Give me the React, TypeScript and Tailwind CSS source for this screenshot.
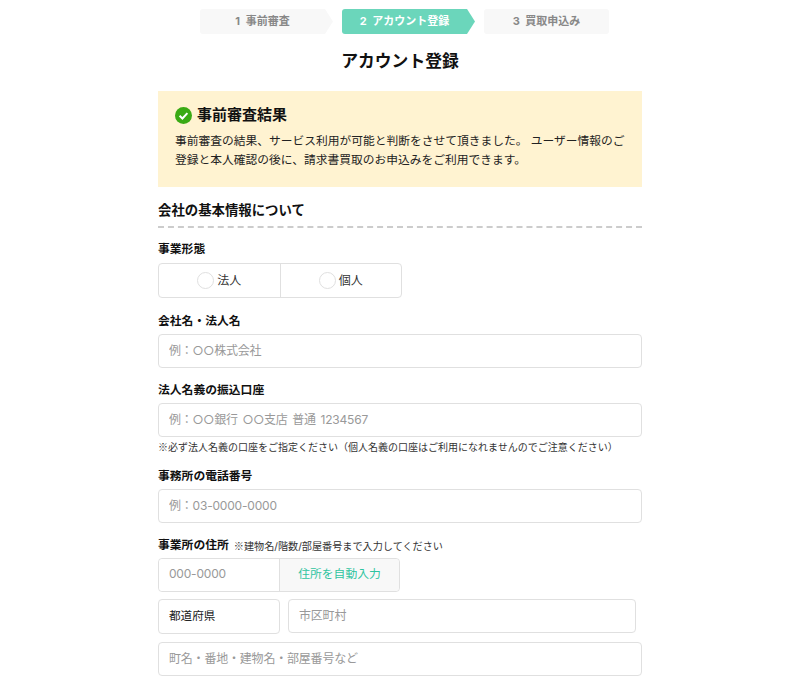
import React from "react";

function Kome() {
  return <span className="font-['Noto_Sans_CJK_JP',sans-serif]">※</span>;
}

function Label({ children, note }: { children: React.ReactNode; note?: string }) {
  return (
    <div className="flex items-center h-[18px] text-[11.8px] font-bold text-[#111]">
      <span>{children}</span>
      {note && (
        <span className="ml-[5px] text-[10.15px] font-normal text-[#333]">
          <Kome />
          {note}
        </span>
      )}
    </div>
  );
}

function Field({ placeholder, className = "" }: { placeholder: string; className?: string }) {
  return (
    <input
      readOnly
      placeholder={placeholder}
      className={`block h-[34px] rounded-[4px] border border-[#e0e0e0] bg-white px-[10px] pb-[2px] text-[12px] tracking-[-0.2px] [word-spacing:1.5px] text-[#333] outline-none placeholder:text-[#999] ${className}`}
    />
  );
}

function Radio({ label, border }: { label: string; border?: boolean }) {
  return (
    <div className={`flex flex-1 items-center justify-center gap-[3px] ${border ? "border-r border-[#e0e0e0]" : ""}`}>
      <span className="h-[17px] w-[17px] rounded-full border border-[#e0e0e0] bg-white" />
      <span className="text-[12px] text-[#333]">{label}</span>
    </div>
  );
}

export default function App() {
  return (
    <div className="min-h-[687px] bg-white font-['Inter','Noto_Sans_CJK_JP',sans-serif] text-[#111] overflow-hidden">
      <div className="mx-auto w-[484px] pt-[9px]">
        <div className="ml-[42px] flex gap-[9px] text-[11px] font-bold [word-spacing:3px]">
          <div className="flex h-[25px] w-[133px] items-center justify-center rounded-l-[3px] bg-[#f8f8f8] pr-[8px] text-[#888] [clip-path:polygon(0_0,94%_0,100%_50%,94%_100%,0_100%)]">
            1 事前審査
          </div>
          <div className="flex h-[25px] w-[133px] items-center justify-center rounded-l-[3px] bg-[#6bd6bb] pr-[8px] text-white [clip-path:polygon(0_0,94%_0,100%_50%,94%_100%,0_100%)]">
            2 アカウント登録
          </div>
          <div className="flex h-[25px] w-[125px] items-center justify-center rounded-[3px] bg-[#f8f8f8] text-[#888]">
            3 買取申込み
          </div>
        </div>

        <h1 className="mt-[14px] text-center text-[16.8px] leading-[26px] font-bold text-[#111]">アカウント登録</h1>

        <div className="mt-[17px] h-[96px] bg-[#fff3d1] px-[17px] pt-[14px]">
          <div className="flex h-[20px] items-center gap-[5px]">
            <svg width="17" height="17" viewBox="0 0 17 17">
              <circle cx="8.5" cy="8.5" r="8.5" fill="#3aaa14" />
              <path d="M4.6 8.8l2.8 2.7 5-5.4" fill="none" stroke="#fff" strokeWidth="2" />
            </svg>
            <span className="text-[15px] font-bold text-[#111]">事前審査結果</span>
          </div>
          <p className="mt-[7px] text-[11.75px] leading-[19px] text-[#222]">
            事前審査の結果、サービス利用が可能と判断をさせて頂きました。 ユーザー情報のご登録と本人確認の後に、請求書買取のお申込みをご利用できます。
          </p>
        </div>

        <h2 className="mt-[13px] pb-[6px] text-[13.4px] leading-[20px] font-bold text-[#111] border-b-2 border-dashed border-[#ccc]">
          会社の基本情報について
        </h2>

        <div className="mt-[13px]">
          <Label>事業形態</Label>
          <div className="mt-[4px] flex h-[35px] w-[244px] rounded-[4px] border border-[#e0e0e0]">
            <Radio label="法人" border />
            <Radio label="個人" />
          </div>
        </div>

        <div className="mt-[15px]">
          <Label>会社名・法人名</Label>
          <Field className="mt-[3px] w-full" placeholder="例：○○株式会社" />
        </div>

        <div className="mt-[14px]">
          <Label>法人名義の振込口座</Label>
          <Field className="mt-[3px] w-full" placeholder="例：○○銀行 ○○支店 普通 1234567" />
          <p className="mt-[2px] text-[10px] leading-[16px] text-[#333]">
            <Kome />
            必ず法人名義の口座をご指定ください（個人名義の口座はご利用になれませんのでご注意ください）
          </p>
        </div>

        <div className="mt-[13px]">
          <Label>事務所の電話番号</Label>
          <Field className="mt-[3px] w-full" placeholder="例：03-0000-0000" />
        </div>

        <div className="mt-[14px]">
          <Label note="建物名/階数/部屋番号まで入力してください">事業所の住所</Label>
          <div className="mt-[3px] flex h-[34px] w-[242px] rounded-[4px] border border-[#e0e0e0]">
            <input
              readOnly
              placeholder="000-0000"
              className="w-[121px] border-r border-[#e0e0e0] bg-white px-[10px] pb-[2px] text-[12px] tracking-[-0.2px] outline-none placeholder:text-[#999] rounded-l-[4px]"
            />
            <div className="flex flex-1 items-center justify-center rounded-r-[4px] bg-[#f8f8f8] text-[11.8px] text-[#2fc4a0]">
              住所を自動入力
            </div>
          </div>
          <div className="mt-[7px] flex items-start">
            <div className="flex h-[35px] w-[122px] items-center rounded-[4px] border border-[#e0e0e0] px-[10px] text-[11.6px] text-[#222]">
              都道府県
            </div>
            <Field className="ml-[8px] w-[348px]" placeholder="市区町村" />
          </div>
          <Field className="mt-[8px] w-full" placeholder="町名・番地・建物名・部屋番号など" />
        </div>
      </div>
    </div>
  );
}
